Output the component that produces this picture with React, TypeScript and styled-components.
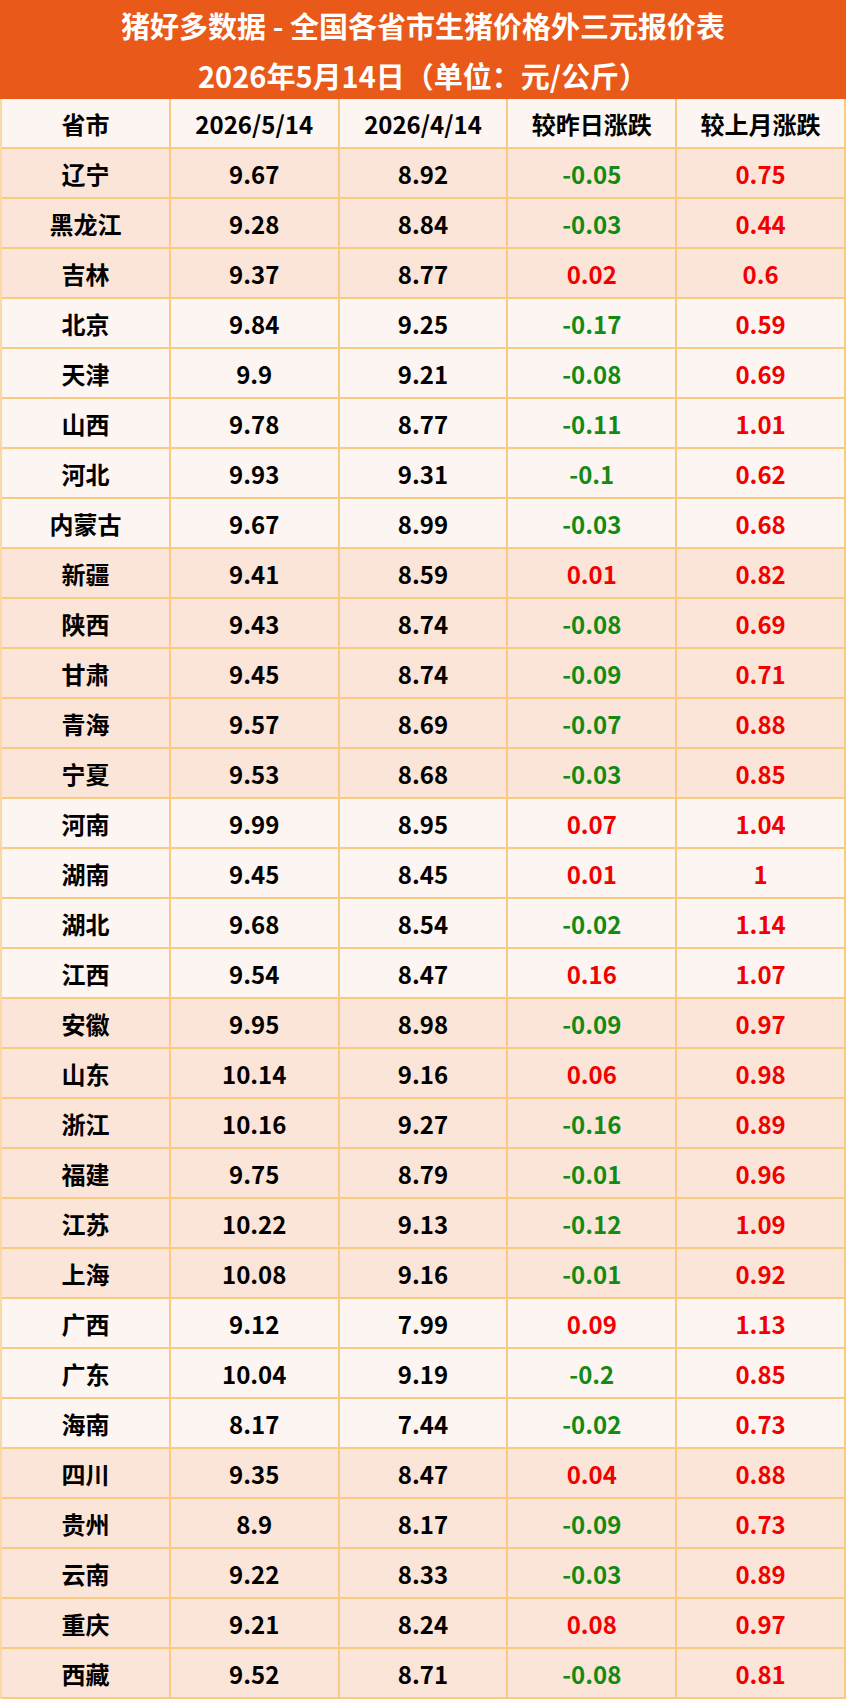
import React from "react";
import styled, { createGlobalStyle } from "styled-components";

const GlobalStyle = createGlobalStyle`
  html, body { margin: 0; padding: 0; background: #ffffff; }
  body { font-family: "Noto Sans CJK SC", "Microsoft YaHei", sans-serif; }
  * { box-sizing: border-box; }
`;

const Page = styled.div`
  width: 846px;
  display: flex;
  flex-direction: column;
`;

const TitleBar = styled.header`
  height: 99px;
  background: #e8591a;
  color: #ffffff;
  display: flex;
  flex-direction: column;
  justify-content: center;
  align-items: center;
  font-family: "Noto Sans CJK SC", sans-serif;
  font-weight: 700;
  font-size: 29px;
  line-height: 50px;
`;

const TitleLine = styled.div`
  white-space: nowrap;
`;

const Grid = styled.div`
  display: grid;
  grid-template-columns: repeat(5, 1fr);
  border-left: 2px solid #fbd9a4;
`;

const Cell = styled.div<{ $bg: string; $color: string }>`
  height: 50px;
  display: flex;
  align-items: center;
  justify-content: center;
  background: ${(p) => p.$bg};
  color: ${(p) => p.$color};
  border-right: 2px solid #f8cb80;
  border-bottom: 2px solid #f8cb80;
  font-family: "Noto Sans CJK SC", sans-serif;
  font-weight: 700;
  font-size: 24px;
  white-space: nowrap;
`;

const LIGHT = "#fcf5f1";
const PEACH = "#fbe4d8";
const BLACK = "#000000";
const GREEN = "#148a14";
const RED = "#f20000";

type Row = [string, string, string, string, string];

const groups: { bg: string; rows: Row[] }[] = [
  {
    bg: PEACH,
    rows: [
      ["辽宁", "9.67", "8.92", "-0.05", "0.75"],
      ["黑龙江", "9.28", "8.84", "-0.03", "0.44"],
      ["吉林", "9.37", "8.77", "0.02", "0.6"],
    ],
  },
  {
    bg: LIGHT,
    rows: [
      ["北京", "9.84", "9.25", "-0.17", "0.59"],
      ["天津", "9.9", "9.21", "-0.08", "0.69"],
      ["山西", "9.78", "8.77", "-0.11", "1.01"],
      ["河北", "9.93", "9.31", "-0.1", "0.62"],
      ["内蒙古", "9.67", "8.99", "-0.03", "0.68"],
    ],
  },
  {
    bg: PEACH,
    rows: [
      ["新疆", "9.41", "8.59", "0.01", "0.82"],
      ["陕西", "9.43", "8.74", "-0.08", "0.69"],
      ["甘肃", "9.45", "8.74", "-0.09", "0.71"],
      ["青海", "9.57", "8.69", "-0.07", "0.88"],
      ["宁夏", "9.53", "8.68", "-0.03", "0.85"],
    ],
  },
  {
    bg: LIGHT,
    rows: [
      ["河南", "9.99", "8.95", "0.07", "1.04"],
      ["湖南", "9.45", "8.45", "0.01", "1"],
      ["湖北", "9.68", "8.54", "-0.02", "1.14"],
      ["江西", "9.54", "8.47", "0.16", "1.07"],
    ],
  },
  {
    bg: PEACH,
    rows: [
      ["安徽", "9.95", "8.98", "-0.09", "0.97"],
      ["山东", "10.14", "9.16", "0.06", "0.98"],
      ["浙江", "10.16", "9.27", "-0.16", "0.89"],
      ["福建", "9.75", "8.79", "-0.01", "0.96"],
      ["江苏", "10.22", "9.13", "-0.12", "1.09"],
      ["上海", "10.08", "9.16", "-0.01", "0.92"],
    ],
  },
  {
    bg: LIGHT,
    rows: [
      ["广西", "9.12", "7.99", "0.09", "1.13"],
      ["广东", "10.04", "9.19", "-0.2", "0.85"],
      ["海南", "8.17", "7.44", "-0.02", "0.73"],
    ],
  },
  {
    bg: PEACH,
    rows: [
      ["四川", "9.35", "8.47", "0.04", "0.88"],
      ["贵州", "8.9", "8.17", "-0.09", "0.73"],
      ["云南", "9.22", "8.33", "-0.03", "0.89"],
      ["重庆", "9.21", "8.24", "0.08", "0.97"],
      ["西藏", "9.52", "8.71", "-0.08", "0.81"],
    ],
  },
];

const headers = ["省市", "2026/5/14", "2026/4/14", "较昨日涨跌", "较上月涨跌"];

export default function App() {
  return (
    <Page>
      <GlobalStyle />
      <TitleBar>
        <TitleLine>猪好多数据 - 全国各省市生猪价格外三元报价表</TitleLine>
        <TitleLine>2026年5月14日（单位：元/公斤）</TitleLine>
      </TitleBar>
      <Grid>
        {headers.map((h) => (
          <Cell key={h} $bg={LIGHT} $color={BLACK}>
            {h}
          </Cell>
        ))}
        {groups.flatMap((g) =>
          g.rows.map((r) => (
            <React.Fragment key={r[0]}>
              <Cell $bg={g.bg} $color={BLACK}>{r[0]}</Cell>
              <Cell $bg={g.bg} $color={BLACK}>{r[1]}</Cell>
              <Cell $bg={g.bg} $color={BLACK}>{r[2]}</Cell>
              <Cell $bg={g.bg} $color={r[3].startsWith("-") ? GREEN : RED}>{r[3]}</Cell>
              <Cell $bg={g.bg} $color={RED}>{r[4]}</Cell>
            </React.Fragment>
          ))
        )}
      </Grid>
    </Page>
  );
}
